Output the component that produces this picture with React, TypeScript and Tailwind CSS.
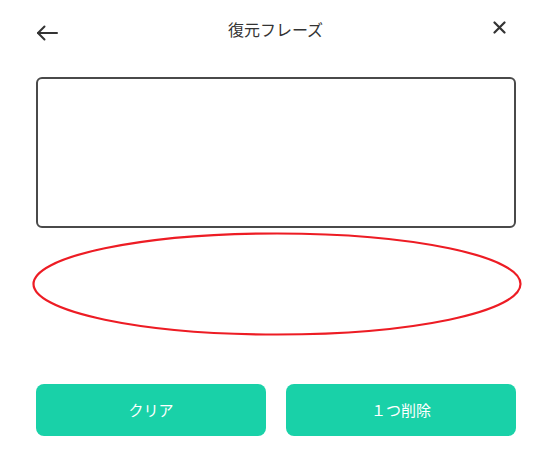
const FONT = "font-['Noto_Sans_CJK_JP','Noto_Sans',sans-serif]";

export default function App() {
  return (
    <div className={`w-[552px] h-[470px] bg-white px-9 ${FONT}`}>
      {/* Header */}
      <div className="relative flex h-[58px] items-center justify-between">
        <button className="mt-2 text-[#333]">
          <svg width="22" height="16" viewBox="0 0 22 16" fill="none" stroke="currentColor" strokeWidth="2" strokeLinecap="round" strokeLinejoin="round">
            <path d="M21 8H2" />
            <path d="M8.5 1.5L2 8l6.5 6.5" />
          </svg>
        </button>
        <h1 className="text-base text-[#333] leading-none">復元フレーズ</h1>
        <button className="mr-[10px] -mt-[3px] text-[#333]">
          <svg width="13" height="13" viewBox="0 0 13 13" fill="none" stroke="currentColor" strokeWidth="2.2" strokeLinecap="round">
            <path d="M1.5 1.5l10 10M11.5 1.5l-10 10" />
          </svg>
        </button>
      </div>

      {/* Phrase box */}
      <div className="mt-[19px] h-[151px] rounded-md border-2 border-[#4a4a4a]" />

      {/* Annotation */}
      <svg className="mt-[4px] -ml-1 block" width="490" height="104" viewBox="0 0 490 104">
        <ellipse cx="245" cy="52" rx="243.5" ry="50.5" fill="none" stroke="#ed1c24" strokeWidth="2.2" />
      </svg>

      {/* Actions */}
      <div className="mt-[48px] grid grid-cols-2 gap-5">
        <button className="h-[52px] rounded-lg bg-[#19d1a8] text-[15px] text-white">クリア</button>
        <button className="h-[52px] rounded-lg bg-[#19d1a8] text-[15px] text-white">１つ削除</button>
      </div>
    </div>
  );
}
